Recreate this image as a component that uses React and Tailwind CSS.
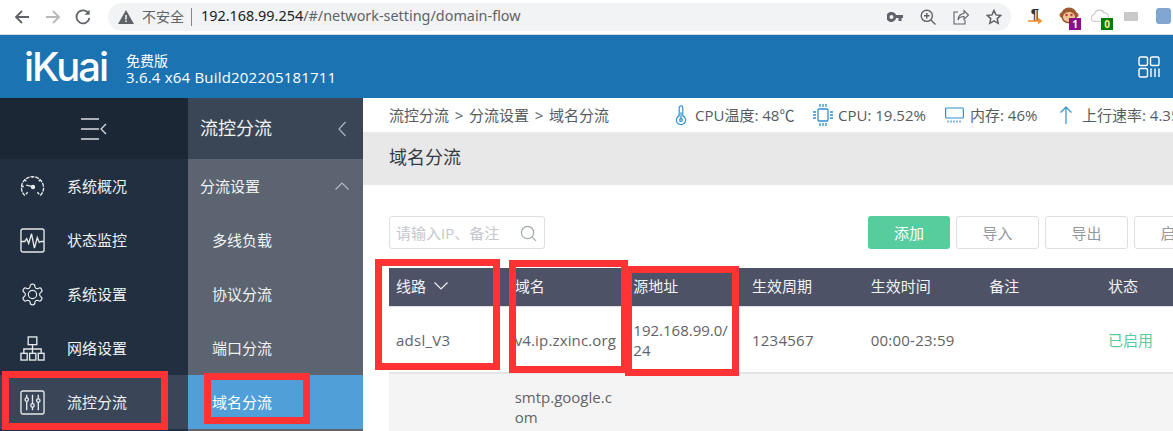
const FONT = "font-['Open_Sans','Noto_Sans_CJK_SC',sans-serif]";

const Gauge = () => (
  <svg width="25" height="25" viewBox="0 0 26 26" fill="none" stroke="#e6e9ec" strokeWidth="1.4">
    <path d="M5 22.5A11.5 11.5 0 1 1 21 22.5" strokeDasharray="4 1" />
    <path d="M6 21l2-2M20 21l-2-2M2 13h2M13 2v2M5 6l1.5 1.5M21 6l-1.5 1.5" />
    <circle cx="13.5" cy="13.5" r="1.6" fill="#e6e9ec" />
    <path d="M13 13.2L6.5 11.5" />
  </svg>
);
const Monitor = () => (
  <svg width="25" height="25" viewBox="0 0 26 26" fill="none" stroke="#e6e9ec" strokeWidth="1.4">
    <rect x="1" y="1" width="24" height="24" rx="2" />
    <path d="M1 14h4l2-3 2 5 3-10 3 15 3-11 2 5 2-1h3" />
  </svg>
);
const Gear = () => (
  <svg width="25" height="25" viewBox="0 0 24 24" fill="none" stroke="#e6e9ec" strokeWidth="1.15">
    <path d="M12.22 2h-.44a2 2 0 0 0-2 2v.18a2 2 0 0 1-1 1.73l-.43.25a2 2 0 0 1-2 0l-.15-.08a2 2 0 0 0-2.73.73l-.22.38a2 2 0 0 0 .73 2.73l.15.1a2 2 0 0 1 1 1.72v.51a2 2 0 0 1-1 1.74l-.15.09a2 2 0 0 0-.73 2.73l.22.38a2 2 0 0 0 2.73.73l.15-.08a2 2 0 0 1 2 0l.43.25a2 2 0 0 1 1 1.73V20a2 2 0 0 0 2 2h.44a2 2 0 0 0 2-2v-.18a2 2 0 0 1 1-1.73l.43-.25a2 2 0 0 1 2 0l.15.08a2 2 0 0 0 2.73-.73l.22-.39a2 2 0 0 0-.73-2.73l-.15-.08a2 2 0 0 1-1-1.74v-.5a2 2 0 0 1 1-1.74l.15-.09a2 2 0 0 0 .73-2.73l-.22-.38a2 2 0 0 0-2.73-.73l-.15.08a2 2 0 0 1-2 0l-.43-.25a2 2 0 0 1-1-1.73V4a2 2 0 0 0-2-2z" />
    <circle cx="12" cy="12" r="4" />
  </svg>
);
const Net = () => (
  <svg width="25" height="25" viewBox="0 0 26 26" fill="none" stroke="#e6e9ec" strokeWidth="1.4">
    <rect x="8.5" y="1" width="9" height="8" />
    <rect x="1" y="18" width="6.5" height="7" />
    <rect x="10" y="18" width="6.5" height="7" />
    <rect x="19" y="18" width="6" height="7" />
    <path d="M13 9v9M4 18v-4.5h18V18" />
  </svg>
);
const Sliders = () => (
  <svg width="25" height="25" viewBox="0 0 26 26" fill="none" stroke="#e6e9ec" strokeWidth="1.4">
    <rect x="1" y="1" width="24" height="24" rx="2" />
    <path d="M7 5v16M13 5v16M19 5v16" />
    <circle cx="7" cy="10" r="1.8" fill="#3a4657" />
    <circle cx="13" cy="16" r="1.8" fill="#3a4657" />
    <circle cx="19" cy="11" r="1.8" fill="#3a4657" />
  </svg>
);

const Chip = () => (
  <svg width="20" height="22" viewBox="0 0 20 22" fill="none" stroke="#2f8fd0" strokeWidth="1.3">
    <rect x="5" y="5" width="10" height="12" rx="1" />
    <path d="M0 8h3M0 11h3M0 14h3M17 8h3M17 11h3M17 14h3M7 0v3M10 0v3M13 0v3M7 19v3M10 19v3M13 19v3" />
  </svg>
);

const Status = ({ icon, children, className }) => (
  <div className={`flex items-center shrink-0 ${className}`}>
    {icon}
    <span className="whitespace-nowrap">{children}</span>
  </div>
);

const side1 = [
  ["系统概况", <Gauge />],
  ["状态监控", <Monitor />],
  ["系统设置", <Gear />],
  ["网络设置", <Net />],
];
const side2 = ["多线负载", "协议分流", "端口分流"];

const Redbox = ({ className }) => (
  <div className={`absolute border-[7px] border-[#ff3333] ${className}`} />
);

const cols = ["域名", "源地址", "生效周期", "生效时间", "备注", "状态"];

export default function App() {
  return (
    <div className={`relative w-[1173px] h-[431px] overflow-hidden flex flex-col bg-white ${FONT}`}>
      {/* browser bar */}
      <div className="h-[35px] shrink-0 flex items-center bg-white border-b border-[#d9d9d9] pb-[1px]">
        <div className="flex items-center pl-[13px] w-[108px] shrink-0">
          <svg width="18" height="18" viewBox="0 0 18 18" fill="none" stroke="#5f6368" strokeWidth="1.8"><path d="M16 9H3M9 3L3 9l6 6" /></svg>
          <svg className="ml-[13px]" width="18" height="18" viewBox="0 0 18 18" fill="none" stroke="#b6b8bb" strokeWidth="1.8"><path d="M2 9h13M9 3l6 6-6 6" /></svg>
          <svg className="ml-[12px]" width="18" height="18" viewBox="0 0 18 18" fill="none" stroke="#5f6368" strokeWidth="1.8"><path d="M14.6 5.6A6.5 6.5 0 1 0 15.4 10" /><path d="M15.6 1.8v5h-5z" fill="#5f6368" stroke="none" /></svg>
        </div>
        <div className="w-[903px] h-[28px] rounded-full bg-[#f1f3f4] flex items-center pl-[10px] pr-[9px] shrink-0">
          <svg width="16" height="14" viewBox="0 0 16 14"><path d="M8 0l8 14H0z" fill="#5f6368" /><path d="M7.2 5h1.6v4.5H7.2zM7.2 10.5h1.6V12H7.2z" fill="#f1f3f4" /></svg>
          <span className="ml-[8px] text-[14px] text-[#5f6368]">不安全</span>
          <span className="ml-[7px] w-px h-[18px] bg-[#80868b]" />
          <span className="ml-[9px] text-[14.4px] leading-none whitespace-nowrap text-[#5f6368] font-['Noto_Sans',sans-serif]"><span className="text-[#202124]">192.168.99.254</span>/#/network-setting/domain-flow</span>
          <div className="ml-auto flex items-center gap-[17px]">
            <svg width="16" height="10" viewBox="0 0 16 10" fill="#5f6368"><path d="M4.5 0a5 5 0 0 1 4.6 3H16v3h-1.500v3h-3V6H9.100A5 5 0 1 1 4.500 0zm0 3a2 2 0 1 0 0 4 2 2 0 0 0 0-4z" /></svg>
            <svg width="16" height="16" viewBox="0 0 16 16" fill="none" stroke="#5f6368" strokeWidth="1.4"><circle cx="6.8" cy="6.8" r="5.6" /><path d="M11 11l4.4 4.4M6.8 4v5.6M4 6.8h5.6" /></svg>
            <svg width="16" height="16" viewBox="0 0 16 16" fill="none" stroke="#5f6368" strokeWidth="1.1"><path d="M5 3H1v12h11v-4" /><path d="M5 11c0-4 3-6.500 6-6.500V1.500l4.500 4.500-4.500 4.500V7.500c-3 0-5 1-6 3.500z" /></svg>
            <svg width="16" height="16" viewBox="0 0 16 16" fill="none" stroke="#5f6368" strokeWidth="1.5"><path d="M8 1.500l2 4.400 4.800.5-3.600 3.200 1 4.700L8 11.900l-4.200 2.400 1-4.700L1.200 6.400 6 5.900z" /></svg>
          </div>
        </div>
        <div className="flex items-start shrink-0 pl-[17px] h-[34px] pt-[7px]">
          <div className="w-[14px] h-[16px] relative text-[#333] font-bold text-[15px] leading-[14px] font-['Liberation_Sans',sans-serif]">
            <span className="block text-center">¶</span>
            <svg className="absolute left-0 top-[11px]" width="14" height="6" viewBox="0 0 14 6" fill="none" stroke="#f58a1f" strokeWidth="1.500"><path d="M0 3h13M10 .5L13 3l-3 2.500" /></svg>
          </div>
          <div className="ml-[17px] w-[22px] h-[23px] relative">
            <svg width="20" height="18" viewBox="0 0 20 18"><circle cx="3" cy="8" r="2.500" fill="#a9643a" /><circle cx="17" cy="8" r="2.500" fill="#a9643a" /><circle cx="10" cy="8.500" r="8" fill="#9c5a33" /><ellipse cx="10" cy="10" rx="6" ry="5" fill="#eec39a" /><circle cx="7.500" cy="8" r="1.200" fill="#c33" /><circle cx="12.500" cy="8" r="1.200" fill="#c33" /></svg>
            <span className="absolute right-0 bottom-0 w-[12px] h-[12px] bg-[#8b0f8b] text-white text-[10px] leading-[12px] text-center font-bold">1</span>
          </div>
          <div className="ml-[10px] w-[22px] h-[23px] relative">
            <svg className="mt-[2px]" width="18" height="14" viewBox="0 0 18 14" fill="none" stroke="#c9c9c9" strokeWidth="1.200"><path d="M4 12.500a3.500 3.500 0 0 1-.5-7A5 5 0 0 1 13 4a4 4 0 0 1 1 8z" /></svg>
            <span className="absolute right-0 bottom-0 w-[12px] h-[12px] bg-[#0a7a0a] text-[#f3f39a] text-[10px] leading-[12px] text-center font-bold">0</span>
          </div>
          <div className="ml-[11px] mt-[5px] w-[14px] h-[9px] bg-[#c9c9c9]" />
          <div className="ml-[18px] mt-[1px] w-[15px] h-[16px] rounded-[3px] bg-[#7fa6cf]" />
        </div>
      </div>

      {/* header */}
      <div className="h-[63px] shrink-0 bg-[#1c73b2] flex items-center pl-[24px] pr-[13px] text-white">
        <span className="w-[102px] font-['Inter',sans-serif] font-medium text-[40px] leading-none tracking-[-2px]">iKuai</span>
        <div className="leading-[17px] mt-[4px]">
          <div className="text-[14px]">免费版</div>
          <div className="whitespace-nowrap text-[15px] tracking-[0.2px]">3.6.4 x64 Build202205181711</div>
        </div>
        <svg className="ml-auto" width="22" height="22" viewBox="0 0 22 22" fill="none" stroke="#fff" strokeWidth="1.4">
          <rect x="1" y="1" width="8.500" height="8.500" rx="1.500" />
          <rect x="12.500" y="1" width="8.500" height="8.500" rx="1.500" />
          <rect x="1" y="12.500" width="8.500" height="8.500" rx="1.500" />
          <path d="M13 12.500V21M17 12.500V21M21 12.500V21" />
        </svg>
      </div>

      <div className="flex flex-1 min-h-0">
        {/* sidebar 1 */}
        <div className="w-[188px] shrink-0 bg-[#222f41] flex flex-col text-[15px] text-[#eef1f4]">
          <div className="h-[61px] shrink-0 bg-[#1c2735] flex items-center justify-center">
            <svg className="ml-[-1px]" width="26" height="22" viewBox="0 0 26 22" fill="none" stroke="#d9dde1" strokeWidth="1.300">
              <path d="M0 1h18M0 11h18M0 21h18M25 6l-5 5 5 5" />
            </svg>
          </div>
          {side1.map(([t, ic]) => (
            <div key={t} className="h-[54px] shrink-0 flex items-center pl-[20px]">
              {ic}
              <span className="ml-[22px]">{t}</span>
            </div>
          ))}
          <div className="h-[54px] shrink-0 flex items-center pl-[20px] bg-[#3a4657]">
            <Sliders />
            <span className="ml-[22px]">流控分流</span>
          </div>
        </div>
        {/* sidebar 2 */}
        <div className="w-[175px] shrink-0 bg-[#5b6470] flex flex-col text-[15px] text-[#f1f3f5]">
          <div className="h-[61px] shrink-0 bg-[#3a4656] flex items-center justify-between pl-[12px] pr-[17px]">
            <span className="text-[18px]">流控分流</span>
            <svg width="8" height="16" viewBox="0 0 8 16" fill="none" stroke="#aeb4bb" strokeWidth="1.200"><path d="M7.500 1L1 8l6.500 7" /></svg>
          </div>
          <div className="h-[54px] shrink-0 flex items-center justify-between pl-[12px] pr-[14px]">
            <span>分流设置</span>
            <svg width="14" height="8" viewBox="0 0 14 8" fill="none" stroke="#b4b9bf" strokeWidth="1.200"><path d="M.5 7.500L7 1l6.500 6.500" /></svg>
          </div>
          {side2.map((t) => (
            <div key={t} className="h-[54px] shrink-0 flex items-center pl-[24px]">{t}</div>
          ))}
          <div className="h-[54px] shrink-0 flex items-center pl-[24px] bg-[#519fd9] text-white">域名分流</div>
        </div>

        {/* main */}
        <div className="flex-1 min-w-0 flex flex-col overflow-hidden">
          <div className="h-[35px] shrink-0 flex items-center pl-[26px] text-[15px] text-[#555b63] border-b border-[#ececec]">
            <div className="shrink-0 w-[286px] flex whitespace-nowrap">
              <span>流控分流</span>
              <span className="w-[20px] text-center">&gt;</span>
              <span>分流设置</span>
              <span className="w-[20px] text-center">&gt;</span>
              <span>域名分流</span>
            </div>
            <Status className="w-[138px]" icon={<svg className="mr-[8px]" width="12" height="20" viewBox="0 0 12 22" fill="none" stroke="#2f8fd0" strokeWidth="1.300"><path d="M4 12V3a2 2 0 0 1 4 0v9a5 5 0 1 1-4 0z" /><path d="M6 8v8" /><circle cx="6" cy="16.500" r="1.500" /></svg>}>CPU温度: 48℃</Status>
            <Status className="w-[132px]" icon={<span className="mr-[5px] flex"><Chip /></span>}>CPU: 19.52%</Status>
            <Status className="w-[115px]" icon={<svg className="mr-[6px]" width="19" height="16" viewBox="0 0 19 16" fill="none" stroke="#2f8fd0" strokeWidth="1.200"><rect x=".6" y="1" width="17.800" height="10" rx="1" /><path d="M3 13.500v2M6 13.500v2M9 13.500v2M12 13.500v2M15 13.500v2" /></svg>}>内存: 46%</Status>
            <Status className="" icon={<svg className="mr-[10px]" width="12" height="18" viewBox="0 0 12 18" fill="none" stroke="#2f8fd0" strokeWidth="1.200"><path d="M6 18V1M.6 6.500L6 1l5.400 5.500" /></svg>}>上行速率: 4.35</Status>
          </div>
          <div className="h-[52px] shrink-0 bg-[#e8e8e8] flex items-center pl-[26px] pb-[3px] text-[18px] text-[#333a42]">域名分流</div>
          <div className="flex-1 min-h-0 pl-[26px] pt-[31px]">
            <div className="flex items-stretch h-[33px] w-[900px] text-[15px]">
              <div className="w-[156px] shrink-0 flex items-center justify-between border border-[#dcdfe3] rounded-[3px] pl-[6px] pr-[7px] pt-[1px] text-[#c4c7cb]">
                <span className="whitespace-nowrap">请输入IP、备注</span>
                <svg width="17" height="17" viewBox="0 0 18 18" fill="none" stroke="#a3a8ae" strokeWidth="1.300"><circle cx="8" cy="8" r="6.500" /><path d="M12.800 12.800l4 4" /></svg>
              </div>
              <button className="ml-[323px] w-[82px] shrink-0 rounded-[3px] bg-[#57cd9e] text-white pt-[1px]">添加</button>
              <button className="ml-[6px] w-[83px] shrink-0 rounded-[3px] border border-[#dcdfe3] text-[#93989e] pt-[1px]">导入</button>
              <button className="ml-[6px] w-[83px] shrink-0 rounded-[3px] border border-[#dcdfe3] text-[#93989e] pt-[1px]">导出</button>
              <button className="ml-[6px] w-[83px] shrink-0 rounded-[3px] border border-[#dcdfe3] text-[#93989e] pt-[1px]">启用</button>
            </div>
            <div className="mt-[19px] w-[900px] text-[15px]">
              <div className="grid grid-cols-[repeat(7,118.67px)] h-[39px] items-center bg-[#4d5266] text-[#f3f4f6] border-b border-[#dfe1e5] pb-[2px]">
                <div className="pl-[7px] flex items-center">
                  线路
                  <svg className="ml-[8px]" width="14" height="8" viewBox="0 0 14 8" fill="none" stroke="#eef0f2" strokeWidth="1.200"><path d="M.5.500L7 7l6.500-6.500" /></svg>
                </div>
                {cols.map((c) => (
                  <div key={c} className="pl-[7px]">{c}</div>
                ))}
              </div>
              <div className="grid grid-cols-[repeat(7,118.67px)] h-[67px] items-center text-[#5f6368] border-b-2 border-[#e4e4e4] leading-[20px]">
                <div className="pl-[7px] tracking-[0.25px]">adsl_V3</div>
                <div className="pl-[7px] tracking-[0.15px] whitespace-nowrap">v4.ip.zxinc.org</div>
                <div className="pl-[7px] pr-[10px] break-all">192.168.99.0/24</div>
                <div className="pl-[7px] tracking-[0.25px]">1234567</div>
                <div className="pl-[7px] tracking-[0.25px]">00:00-23:59</div>
                <div />
                <div className="pl-[7px] text-[#57cd9e]">已启用</div>
              </div>
              <div className="grid grid-cols-[repeat(7,118.67px)] h-[60px] pt-[13px] bg-[#f4f4f4] text-[#5f6368] leading-[20px]">
                <div />
                <div className="pl-[7px] pr-[7px] break-all">smtp.google.com</div>
              </div>
            </div>
          </div>
        </div>
      </div>

      {/* red annotation boxes */}
      <Redbox className="left-[2px] top-[371px] w-[166px] h-[59px]" />
      <Redbox className="left-[204px] top-[373px] w-[106px] h-[51px]" />
      <Redbox className="left-[375px] top-[259px] w-[125px] h-[111px]" />
      <Redbox className="left-[509px] top-[260px] w-[119px] h-[113px]" />
      <Redbox className="left-[625px] top-[266px] w-[114px] h-[110px]" />
    </div>
  );
}
